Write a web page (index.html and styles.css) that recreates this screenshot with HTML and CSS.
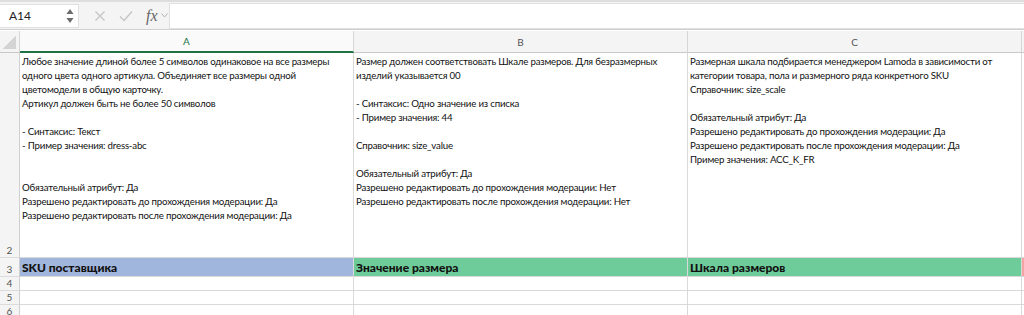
FILE: index.html
```html
<!DOCTYPE html>
<html lang="ru">
<head>
  <meta charset="UTF-8" />
  <title>Шаблон</title>
  <link rel="stylesheet" href="styles.css">
</head>
<body>
  <div class="formula-bar">
    <div class="name-box">
      <span>A14</span>
      <svg class="stepper" width="8" height="16" viewBox="0 0 8 16">
        <path d="M4 1 L7.5 6 L0.5 6 Z" fill="#6b6b6b"/>
        <path d="M4 15 L7.5 10 L0.5 10 Z" fill="#6b6b6b"/>
      </svg>
    </div>
    <div class="fx-tools">
      <svg width="12" height="12" viewBox="0 0 12 12"><path d="M1.5 1.5 L10.5 10.5 M10.5 1.5 L1.5 10.5" stroke="#c4c4c4" stroke-width="1.3"/></svg>
      <svg width="14" height="12" viewBox="0 0 14 12"><path d="M1 6.5 L5 10.5 L13 1.5" stroke="#c4c4c4" stroke-width="1.3" fill="none"/></svg>
      <span class="fx">fx</span>
      <svg width="7" height="5" viewBox="0 0 7 5"><path d="M0.5 0.5 L3.5 4 L6.5 0.5" stroke="#b0b0b0" stroke-width="1" fill="none"/></svg>
    </div>
    <div class="formula-input"></div>
  </div>

  <div class="sheet">
    <div class="corner"></div>
    <div class="col-head selected">A</div>
    <div class="col-head">B</div>
    <div class="col-head">C</div>
    <div class="col-head tail"></div>

    <div class="row-head">2</div>
    <div class="cell text">Любое значение длиной более 5 символов одинаковое на все размеры
одного цвета одного артикула. Объединяет все размеры одной
цветомодели в общую карточку.
Артикул должен быть не более 50 символов

- Синтаксис: Текст
- Пример значения: dress-abc


Обязательный атрибут: Да
Разрешено редактировать до прохождения модерации: Да
Разрешено редактировать после прохождения модерации: Да</div>
    <div class="cell text">Размер должен соответствовать Шкале размеров. Для безразмерных
изделий указывается 00

- Синтаксис: Одно значение из списка
- Пример значения: 44

Справочник: size_value

Обязательный атрибут: Да
Разрешено редактировать до прохождения модерации: Нет
Разрешено редактировать после прохождения модерации: Нет</div>
    <div class="cell text">Размерная шкала подбирается менеджером Lamoda в зависимости от
категории товара, пола и размерного ряда конкретного SKU
Справочник: size_scale

Обязательный атрибут: Да
Разрешено редактировать до прохождения модерации: Да
Разрешено редактировать после прохождения модерации: Да
Пример значения: ACC_K_FR</div>
    <div class="cell tail"></div>

    <div class="row-head">3</div>
    <div class="cell title blue">SKU поставщика</div>
    <div class="cell title green">Значение размера</div>
    <div class="cell title green">Шкала размеров</div>
    <div class="cell tail pink"></div>

    <div class="row-head">4</div>
    <div class="cell"></div><div class="cell"></div><div class="cell"></div><div class="cell tail"></div>
    <div class="row-head">5</div>
    <div class="cell"></div><div class="cell"></div><div class="cell"></div><div class="cell tail"></div>
    <div class="row-head">6</div>
    <div class="cell"></div><div class="cell"></div><div class="cell"></div><div class="cell tail"></div>
  </div>
</body>
</html>
```

FILE: styles.css
```css
body {
  margin: 0;
  background: #fff;
  font-family: Lato, "Open Sans", sans-serif;
  color: #1b1b1b;
  overflow: hidden;
}
.formula-bar {
  display: flex;
  align-items: center;
  height: 30px;
  background: #f4f4f4;
  border-top: 2px solid #dedede;
  border-bottom: 1px solid #cfcfcf;
  box-sizing: border-box;
}
.name-box {
  display: flex;
  align-items: center;
  justify-content: space-between;
  width: 79px;
  height: 24px;
  box-sizing: border-box;
  padding: 0 4px 0 9px;
  background: #fff;
  border: 1px solid #e0e0e0;
  border-left: none;
  font-size: 12px;
  color: #222;
}
.fx-tools {
  display: flex;
  align-items: center;
  gap: 13px;
  padding-left: 15px;
  width: 90px;
  box-sizing: border-box;
}
.fx-tools .fx {
  font-family: "Liberation Serif", serif;
  font-style: italic;
  font-size: 16px;
  color: #666;
  margin-right: -10px;
}
.formula-input {
  flex: 1;
  height: 24px;
  background: #fff;
  border: 1px solid #e0e0e0;
  border-right: none;
}
.sheet {
  display: grid;
  grid-template-columns: 20px 334px 334px 334px 1fr;
  grid-template-rows: 22px 205px 19px 14px 14px 14px;
  margin-top: 1px;
}
.corner {
  background: #f4f4f4 linear-gradient(to top left, #d4d4d4 0 50%, transparent 50%) no-repeat;
  background-size: 13px 13px;
  background-position: right 3px bottom 3px;
  border-right: 1px solid #d6d6d6;
  border-bottom: 1px solid #c9c9c9;
}
.col-head {
  display: flex;
  align-items: center;
  justify-content: center;
  background: #f4f4f4;
  border-right: 1px solid #d6d6d6;
  border-bottom: 1px solid #c9c9c9;
  font-size: 10px;
  color: #555;
}
.col-head.selected {
  background: #fafafa;
  color: #217346;
  border-bottom: 2px solid #217346;
}
.col-head.tail {
  border-right: none;
}
.row-head {
  display: flex;
  align-items: flex-end;
  justify-content: center;
  padding-bottom: 1px;
  background: #f4f4f4;
  border-right: 1px solid #cfcfcf;
  border-bottom: 1px solid #dcdcdc;
  font-size: 10px;
  color: #555;
  line-height: 12px;
}
.cell {
  border-right: 1px solid #d9d9d9;
  border-bottom: 1px solid #d9d9d9;
  overflow: hidden;
  white-space: pre;
}
.cell.tail {
  border-right: none;
}
.cell.text {
  padding: 1px 0 0 2px;
  font-size: 9.7px;
  letter-spacing: -0.2px;
  line-height: 14px;
  color: #111;
}
.cell.title {
  display: flex;
  align-items: center;
  padding-left: 2px;
  font-size: 12px;
  font-weight: 900;
  color: #111;
}
.blue {
  background: #a1b6dc;
}
.green {
  background: #6ecc9a;
}
.cell.pink {
  background: #f4a3a3;
}
```
